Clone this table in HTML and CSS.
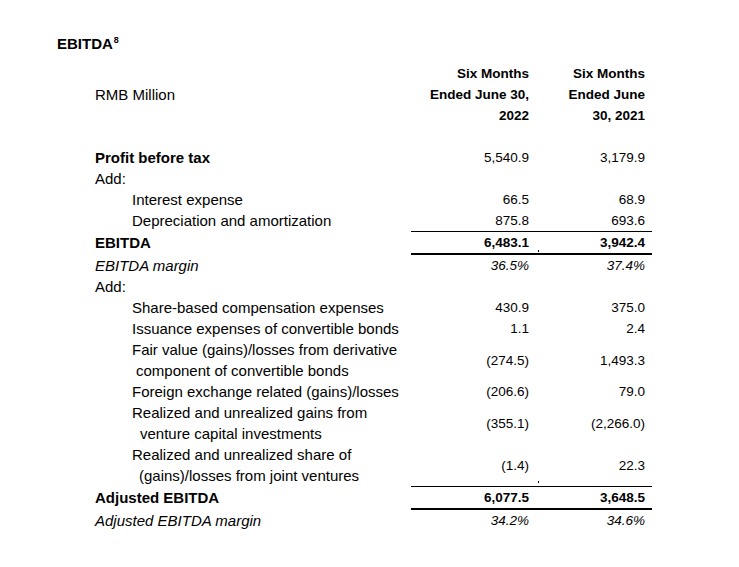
FILE: index.html
```html
<!DOCTYPE html>
<html>
<head>
<meta charset="utf-8">
<link rel="stylesheet" href="styles.css">
</head>
<body>
<div class="page">
  <div class="title">EBITDA<sup class="fn">8</sup></div>
  <table class="fin">
    <colgroup>
      <col class="c-label">
      <col class="c-a">
      <col class="c-b">
    </colgroup>
    <tbody>
      <tr class="head">
        <td class="label mid">RMB Million</td>
        <td class="num a hd">Six Months<br>Ended June 30,<br>2022</td>
        <td class="num b hd">Six Months<br>Ended June<br>30, 2021</td>
      </tr>
      <tr class="spacer"><td></td><td></td><td></td></tr>
      <tr>
        <td class="label bold">Profit before tax</td>
        <td class="num a">5,540.9</td>
        <td class="num b">3,179.9</td>
      </tr>
      <tr>
        <td class="label">Add:</td>
        <td class="num a"></td>
        <td class="num b"></td>
      </tr>
      <tr>
        <td class="label sub">Interest expense</td>
        <td class="num a">66.5</td>
        <td class="num b">68.9</td>
      </tr>
      <tr>
        <td class="label sub">Depreciation and amortization</td>
        <td class="num a">875.8</td>
        <td class="num b">693.6</td>
      </tr>
      <tr class="total">
        <td class="label bold">EBITDA</td>
        <td class="num a bold">6,483.1</td>
        <td class="num b bold tick">3,942.4</td>
      </tr>
      <tr>
        <td class="label ital">EBITDA margin</td>
        <td class="num a ital">36.5%</td>
        <td class="num b ital">37.4%</td>
      </tr>
      <tr>
        <td class="label">Add:</td>
        <td class="num a"></td>
        <td class="num b"></td>
      </tr>
      <tr>
        <td class="label sub">Share-based compensation expenses</td>
        <td class="num a">430.9</td>
        <td class="num b">375.0</td>
      </tr>
      <tr>
        <td class="label sub">Issuance expenses of convertible bonds</td>
        <td class="num a">1.1</td>
        <td class="num b">2.4</td>
      </tr>
      <tr>
        <td class="label sub"><span class="ln">Fair value (gains)/losses from derivative</span><span class="ln cont1">component of convertible bonds</span></td>
        <td class="num a">(274.5)</td>
        <td class="num b">1,493.3</td>
      </tr>
      <tr>
        <td class="label sub">Foreign exchange related (gains)/losses</td>
        <td class="num a">(206.6)</td>
        <td class="num b">79.0</td>
      </tr>
      <tr>
        <td class="label sub"><span class="ln">Realized and unrealized gains from</span><span class="ln cont2">venture capital investments</span></td>
        <td class="num a">(355.1)</td>
        <td class="num b">(2,266.0)</td>
      </tr>
      <tr>
        <td class="label sub"><span class="ln">Realized and unrealized share of</span><span class="ln cont3">(gains)/losses from joint ventures</span></td>
        <td class="num a">(1.4)</td>
        <td class="num b tick-top">22.3</td>
      </tr>
      <tr class="total">
        <td class="label bold">Adjusted EBITDA</td>
        <td class="num a bold">6,077.5</td>
        <td class="num b bold">3,648.5</td>
      </tr>
      <tr>
        <td class="label ital">Adjusted EBITDA margin</td>
        <td class="num a ital">34.2%</td>
        <td class="num b ital">34.6%</td>
      </tr>
    </tbody>
  </table>
</div>
</body>
</html>
```

FILE: styles.css
```css
html, body {
  margin: 0;
  padding: 0;
  background: #ffffff;
}

body {
  font-family: "Liberation Sans", Arial, sans-serif;
  color: #000000;
}

.page {
  padding: 35px 0 0 57px;
}

.title {
  font-size: 15px;
  font-weight: bold;
  line-height: 18px;
  height: 18px;
}

.title .fn {
  font-size: 9px;
  vertical-align: 0;
  position: relative;
  top: -6px;
  margin-left: 1px;
}

.fin {
  margin: 10px 0 0 38px;
  border-collapse: separate;
  border-spacing: 0;
  table-layout: fixed;
  width: 557px;
}

.c-label { width: 316px; }
.c-a { width: 127px; }
.c-b { width: 114px; }

.fin td {
  padding: 0;
  line-height: 21px;
  vertical-align: middle;
  font-size: 15px;
}

.fin td.num {
  font-size: 13.5px;
  text-align: right;
  white-space: nowrap;
}

.fin td.num.a { padding-right: 9px; }
.fin td.num.b { padding-right: 7px; }

.fin td.hd {
  font-weight: bold;
  line-height: 21px;
}

.spacer td {
  height: 21px;
}

.label {
  white-space: nowrap;
}

.label.sub {
  padding-left: 37px;
  vertical-align: top;
}

.ln {
  display: block;
}

.cont1 { padding-left: 4px; }
.cont2 { padding-left: 8px; }
.cont3 { padding-left: 7px; }

.bold { font-weight: bold; }
.ital { font-style: italic; }

.total td {
  border-top: 1px solid #000000;
  border-bottom: 2px solid #000000;
}

.total td.label {
  border-top-color: transparent;
  border-bottom-color: transparent;
}

.tick {
  position: relative;
}

.tick::before {
  content: "";
  position: absolute;
  left: 0;
  bottom: 1px;
  width: 1px;
  height: 2px;
  background: #000000;
}

.tick-top {
  position: relative;
}

.tick-top::before {
  content: "";
  position: absolute;
  left: 0;
  bottom: 3px;
  width: 1px;
  height: 2px;
  background: #000000;
}
```
